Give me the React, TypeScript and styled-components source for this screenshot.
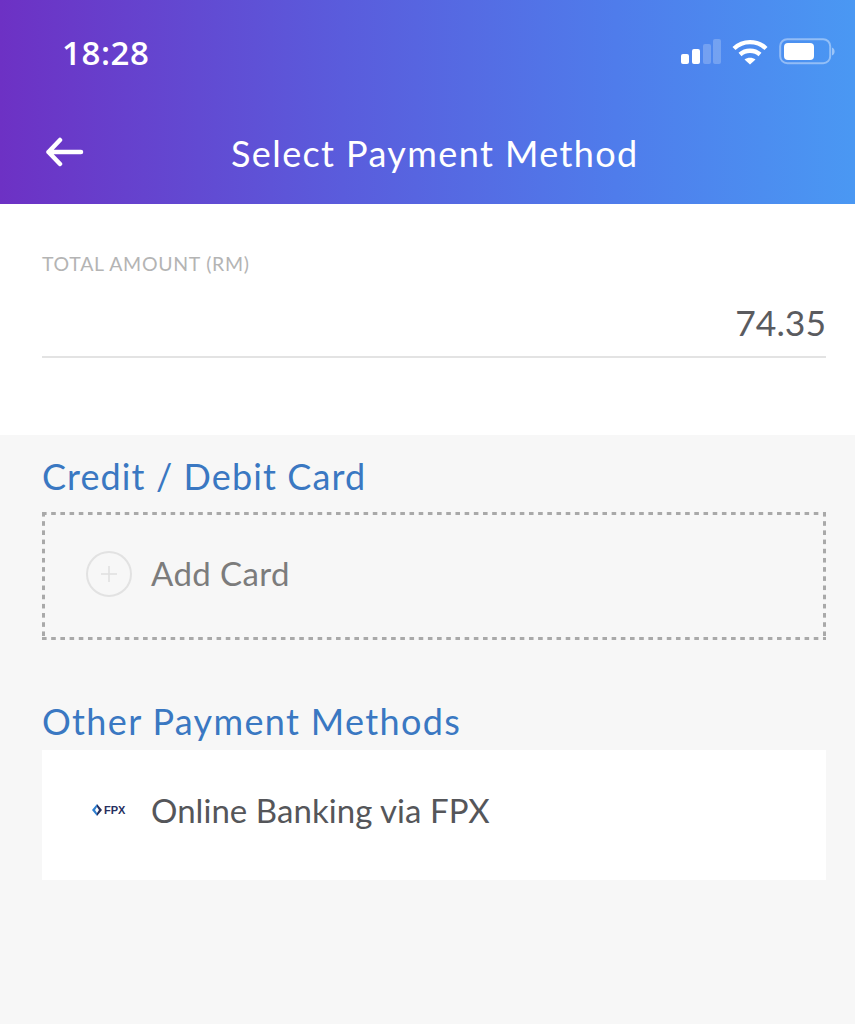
import * as React from 'react'
import styled, { createGlobalStyle } from 'styled-components'

const GlobalStyle = createGlobalStyle`
  html, body {
    margin: 0;
    padding: 0;
    background: #f7f7f7;
    font-family: "Lato", "Open Sans", sans-serif;
  }
`

const Page = styled.div`
  width: 855px;
  height: 1024px;
  overflow: hidden;
  background: #f7f7f7;
`

const Header = styled.header`
  height: 204px;
  background: linear-gradient(90deg, #6d31c4 0%, #5a5cdc 40%, #4f7ceb 72%, #4a98f3 100%);
  color: #fff;
`

const StatusBar = styled.div`
  height: 106px;
  box-sizing: border-box;
  padding: 28px 20px 0 62px;
  display: flex;
  justify-content: space-between;
  align-items: flex-start;
`

const Time = styled.div`
  font-family: "Open Sans", sans-serif;
  font-size: 33px;
  line-height: 50px;
  font-weight: 600;
  letter-spacing: 0.6px;
`

const StatusIcons = styled.div`
  display: flex;
  align-items: center;
  gap: 11px;
  padding-top: 10px;
`

const NavBar = styled.div`
  height: 98px;
  display: flex;
  align-items: flex-start;
  padding-left: 46px;
`

const BackIcon = styled.svg`
  width: 38px;
  height: 30px;
  margin-top: 31px;
`

const Title = styled.h1`
  margin: 0;
  margin-left: 147px;
  font-size: 36px;
  line-height: 94px;
  font-weight: 400;
  letter-spacing: 1.4px;
  white-space: nowrap;
`

const AmountPanel = styled.section`
  height: 231px;
  box-sizing: border-box;
  background: #fff;
  padding: 48px 29px 0 42px;
`

const AmountLabel = styled.div`
  font-size: 19.5px;
  line-height: 24px;
  letter-spacing: 0.7px;
  color: #b4b4b4;
`

const AmountValue = styled.div`
  margin-top: 22px;
  height: 60px;
  box-sizing: border-box;
  border-bottom: 2px solid #e3e3e3;
  text-align: right;
  font-size: 35.5px;
  line-height: 50px;
  color: #5a5b5f;
`

const Content = styled.main`
  padding: 0 29px 0 42px;
`

const SectionTitle = styled.h2<{ $top: number; $spacing: number }>`
  margin: ${p => p.$top}px 0 0;
  font-size: 36px;
  line-height: 48px;
  font-weight: 400;
  letter-spacing: ${p => p.$spacing}px;
  color: #3a78c2;
`

const AddCard = styled.div`
  margin-top: 12px;
  height: 128px;
  box-sizing: border-box;
  background:
    linear-gradient(90deg, #a9a9a9 5px, transparent 5px) 0 0 / 9.2px 3px repeat-x,
    linear-gradient(90deg, #a9a9a9 5px, transparent 5px) 0 100% / 9.2px 3px repeat-x,
    linear-gradient(180deg, #a9a9a9 5px, transparent 5px) 0 0 / 3px 9.2px repeat-y,
    linear-gradient(180deg, #a9a9a9 5px, transparent 5px) 100% 0 / 3px 9.2px repeat-y;
  display: flex;
  align-items: center;
  padding: 0 0 5px 44px;
`

const PlusCircle = styled.div`
  width: 46px;
  height: 46px;
  box-sizing: border-box;
  border: 2px solid #e2e2e2;
  border-radius: 50%;
  display: flex;
  align-items: center;
  justify-content: center;
  margin-right: 19px;
`

const RowLabel = styled.span<{ $color: string; $spacing: number }>`
  font-size: 33px;
  line-height: 44px;
  letter-spacing: ${p => p.$spacing}px;
  color: ${p => p.$color};
`

const AddCardLabel = styled(RowLabel)`
  position: relative;
  top: -1px;
`

const PaymentRow = styled.div`
  margin-top: 5px;
  height: 130px;
  background: #fff;
  display: flex;
  align-items: flex-start;
  padding: 38px 0 0 50px;
  box-sizing: border-box;
`

const FpxLogo = styled.div`
  width: 59px;
  height: 44px;
  display: flex;
  align-items: center;
  gap: 2px;
  color: #27305f;
  font-family: "Liberation Sans", sans-serif;
  font-weight: 700;
  font-size: 11px;
`

export default function App() {
  return (
    <Page>
      <GlobalStyle />
      <Header>
        <StatusBar>
          <Time>18:28</Time>
          <StatusIcons>
            <svg width="40" height="26" viewBox="0 0 40 26">
              <rect x="0" y="15" width="8" height="10" rx="2" fill="#fff" />
              <rect x="11" y="10" width="8" height="15" rx="2" fill="#fff" />
              <rect x="22" y="5" width="8" height="20" rx="2" fill="#fff" opacity="0.22" />
              <rect x="32" y="0" width="8" height="25" rx="2" fill="#fff" opacity="0.22" />
            </svg>
            <svg width="36" height="26" viewBox="0 0 36 26" fill="none" stroke="#fff" strokeWidth="4.4">
              <path d="M2 9.5C11 1 25 1 34 9.5" />
              <path d="M8 15.5C13.5 10.5 22.5 10.5 28 15.5" />
              <path d="M18 25.5L12.5 20.5C15.5 18 20.5 18 23.5 20.5Z" fill="#fff" stroke="none" />
            </svg>
            <svg width="56" height="28" viewBox="0 0 56 28">
              <rect x="1.2" y="1.2" width="50" height="24" rx="7" fill="none" stroke="#fff" strokeOpacity="0.4" strokeWidth="2" />
              <rect x="5" y="5" width="30" height="17" rx="4" fill="#fff" />
              <path d="M53 9.5C55 10.5 55.6 12 55.6 13.5C55.6 15 55 16.5 53 17.5Z" fill="#fff" fillOpacity="0.45" />
            </svg>
          </StatusIcons>
        </StatusBar>
        <NavBar>
          <BackIcon viewBox="0 0 38 30" fill="none" stroke="#fff" strokeWidth="4.5" strokeLinecap="round" strokeLinejoin="round">
            <path d="M2.5 15H35M14 3L2.5 15L14 27" />
          </BackIcon>
          <Title>Select Payment Method</Title>
        </NavBar>
      </Header>
      <AmountPanel>
        <AmountLabel>TOTAL AMOUNT (RM)</AmountLabel>
        <AmountValue>74.35</AmountValue>
      </AmountPanel>
      <Content>
        <SectionTitle $top={17} $spacing={1.1}>Credit / Debit Card</SectionTitle>
        <AddCard>
          <PlusCircle>
            <svg width="18" height="18" viewBox="0 0 18 18" stroke="#e0e0e0" strokeWidth="1.5">
              <path d="M9 1V17M1 9H17" />
            </svg>
          </PlusCircle>
          <AddCardLabel $color="#7c7c7c" $spacing={0.4}>Add Card</AddCardLabel>
        </AddCard>
        <SectionTitle $top={57} $spacing={1.35}>Other Payment Methods</SectionTitle>
        <PaymentRow>
          <FpxLogo>
            <svg width="10" height="12" viewBox="0 0 10 12">
              <path d="M5 0L0 6L5 12V9L3 6L5 3Z" fill="#2f7fd0" />
              <path d="M5 0L10 6L5 12V9L7 6L5 3Z" fill="#27305f" />
            </svg>
            FPX
          </FpxLogo>
          <RowLabel $color="#55565a" $spacing={0.05}>Online Banking via FPX</RowLabel>
        </PaymentRow>
      </Content>
    </Page>
  )
}
